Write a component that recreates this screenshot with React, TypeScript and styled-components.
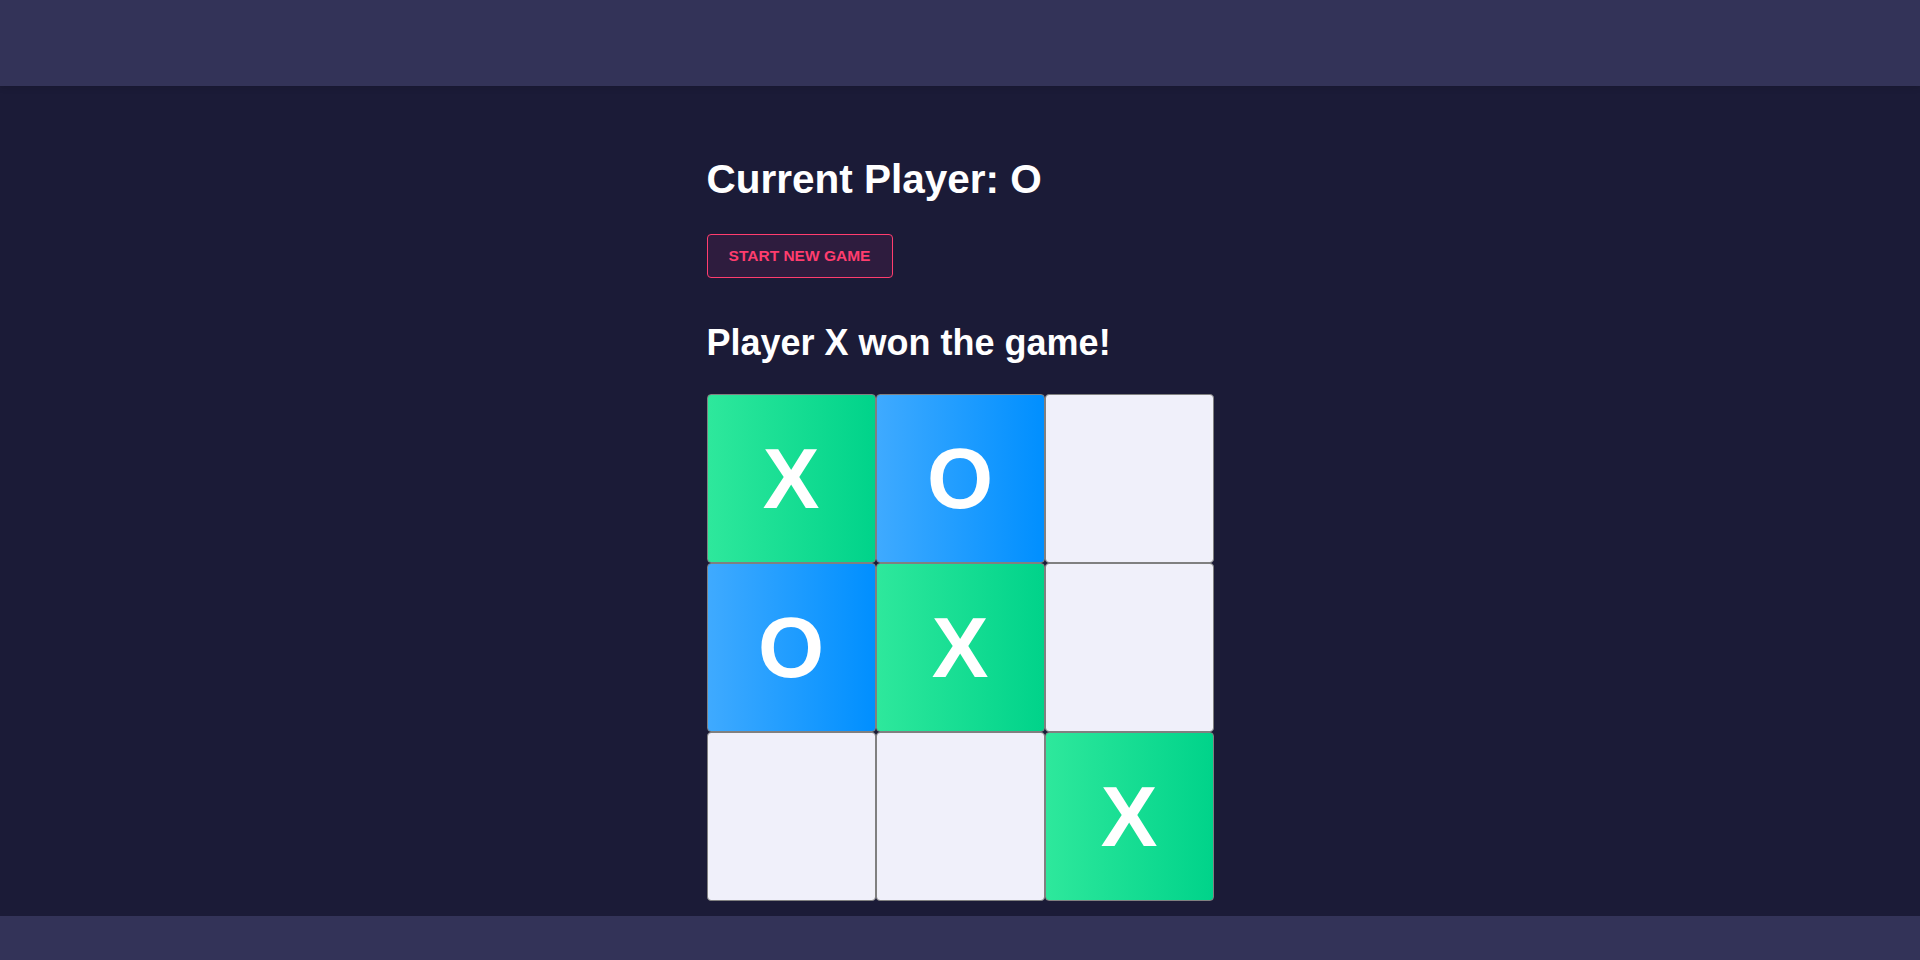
import React from "react";
import styled, { createGlobalStyle } from "styled-components";

const Global = createGlobalStyle`
  html, body { margin: 0; padding: 0; }
  body {
    background: #1b1b37;
    font-family: "Liberation Sans", Arial, sans-serif;
    color: #ffffff;
  }
  * { box-sizing: border-box; }
`;

const Page = styled.div`
  display: flex;
  flex-direction: column;
  height: 960px;
  overflow: hidden;
`;

const Header = styled.header`
  flex: 0 0 86px;
  background: #333358;
  box-shadow: 0 2px 6px rgba(0, 0, 0, 0.12);
  position: relative;
  z-index: 1;
`;

const Main = styled.main`
  flex: 1;
  display: flex;
  justify-content: center;
  padding-top: 70px;
`;

const Footer = styled.footer`
  flex: 0 0 44px;
  background: #333358;
`;

const Column = styled.div`
  width: 507px;
  display: flex;
  flex-direction: column;
  align-items: flex-start;
`;

const Title = styled.h1`
  margin: 0;
  font-size: 40.5px;
  font-weight: 700;
  line-height: 46px;
`;

const NewGameButton = styled.button`
  margin-top: 32px;
  height: 44px;
  width: 186px;
  border: 1px solid #ff3d6e;
  border-radius: 4px;
  background: #2e1c3e;
  color: #ff3d6e;
  font-family: "Liberation Sans", Arial, sans-serif;
  font-weight: 700;
  font-size: 15.5px;
  text-transform: uppercase;
  cursor: pointer;
`;

const Status = styled.h2`
  margin: 44px 0 0;
  font-size: 36px;
  font-weight: 700;
  line-height: 42px;
`;

const Board = styled.div`
  margin-top: 30px;
  display: grid;
  grid-template-columns: repeat(3, 169px);
  grid-template-rows: repeat(3, 169px);
`;

type Mark = "X" | "O" | "";

const Cell = styled.div<{ $mark: Mark }>`
  border: 1px solid #808080;
  border-radius: 4px;
  display: flex;
  align-items: center;
  justify-content: center;
  font-size: 85px;
  font-weight: 700;
  color: #ffffff;
  background: ${(p) =>
    p.$mark === "X"
      ? "linear-gradient(to right, #2ee89c, #00d38a)"
      : p.$mark === "O"
      ? "linear-gradient(to right, #3faaff, #008fff)"
      : "#f0f0fa"};
`;

const board: Mark[] = ["X", "O", "", "O", "X", "", "", "", "X"];

export default function App() {
  return (
    <>
      <Global />
      <Page>
        <Header />
        <Main>
          <Column>
            <Title>Current Player: O</Title>
            <NewGameButton>Start new game</NewGameButton>
            <Status>Player X won the game!</Status>
            <Board>
              {board.map((m, i) => (
                <Cell key={i} $mark={m}>
                  {m}
                </Cell>
              ))}
            </Board>
          </Column>
        </Main>
        <Footer />
      </Page>
    </>
  );
}
